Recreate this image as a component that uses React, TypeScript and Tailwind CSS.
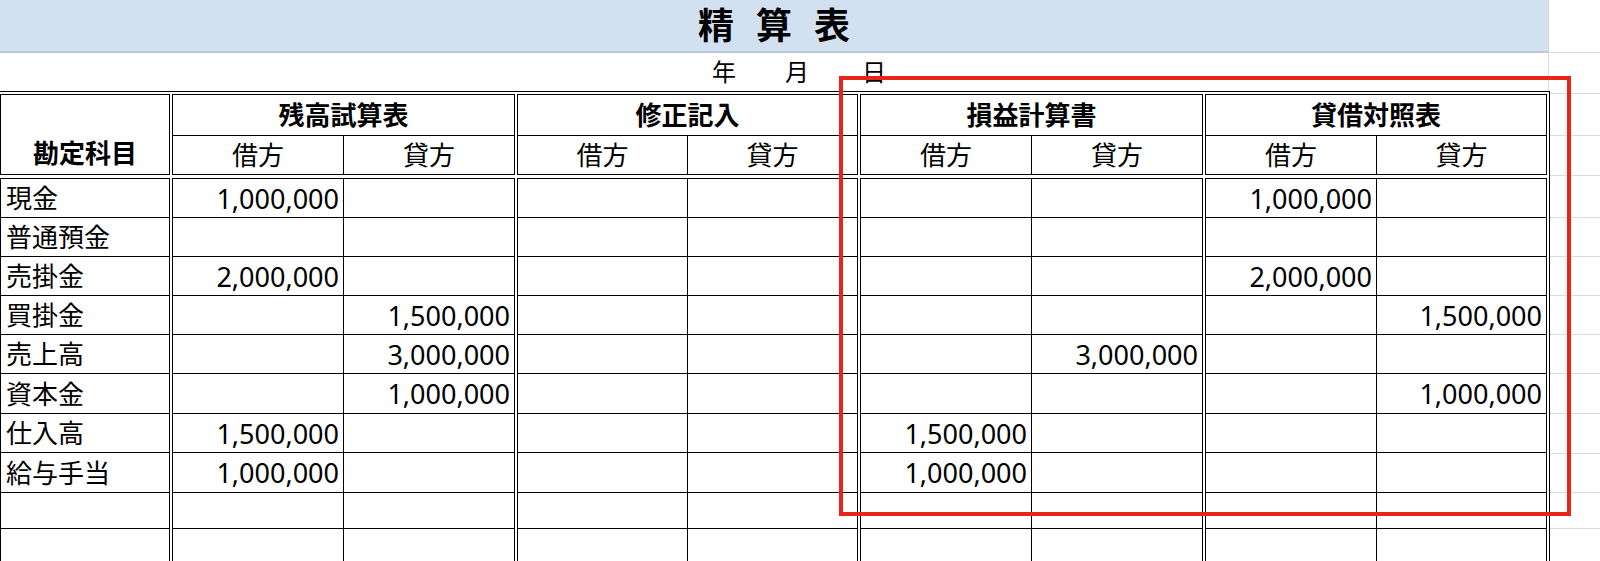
import React from "react";

const FONT = "font-['Noto_Sans','Noto_Sans_CJK_JP',sans-serif]";

type Row = { name: string; v: string[] };

const rows: Row[] = [
  { name: "現金", v: ["1,000,000", "", "", "", "", "", "1,000,000", ""] },
  { name: "普通預金", v: ["", "", "", "", "", "", "", ""] },
  { name: "売掛金", v: ["2,000,000", "", "", "", "", "", "2,000,000", ""] },
  { name: "買掛金", v: ["", "1,500,000", "", "", "", "", "", "1,500,000"] },
  { name: "売上高", v: ["", "3,000,000", "", "", "", "3,000,000", "", ""] },
  { name: "資本金", v: ["", "1,000,000", "", "", "", "", "", "1,000,000"] },
  { name: "仕入高", v: ["1,500,000", "", "", "", "1,500,000", "", "", ""] },
  { name: "給与手当", v: ["1,000,000", "", "", "", "1,000,000", "", "", ""] },
  { name: "", v: ["", "", "", "", "", "", "", ""] },
  { name: "", v: ["", "", "", "", "", "", "", ""] },
  { name: "", v: ["", "", "", "", "", "", "", ""] },
];

const ROW_H = [
  "h-[39px]",
  "h-[39px]",
  "h-[39px]",
  "h-[39px]",
  "h-[39px]",
  "h-[40px]",
  "h-[39px]",
  "h-[40px]",
  "h-[36px]",
  "h-[40px]",
  "h-[40px]",
];

const SUB1_W = ["w-[171px]", "w-[170px]", "w-[171px]", "w-[171px]"];
const GROUPS = ["残高試算表", "修正記入", "損益計算書", "貸借対照表"];

const STRIP_H = [
  "h-[41px]",
  "h-[42px]",
  "h-[40px]",
  "h-[42px]",
  "h-[39px]",
  "h-[39px]",
  "h-[39px]",
  "h-[39px]",
  "h-[40px]",
  "h-[40px]",
  "h-[39px]",
  "h-[36px]",
];

function GroupHeader({ g }: { g: number }) {
  return (
    <div className="h-[81px] border border-black flex flex-col">
      <div className="h-[41px] shrink-0 border-b border-black flex items-center justify-center text-[26px] font-bold leading-none">
        {GROUPS[g]}
      </div>
      <div className="flex-1 flex">
        <div
          className={`${SUB1_W[g]} shrink-0 border-r border-black flex items-center justify-center text-[26px] leading-none`}
        >
          借方
        </div>
        <div className="flex-1 flex items-center justify-center text-[26px] leading-none">
          貸方
        </div>
      </div>
    </div>
  );
}

function GroupBody({ g }: { g: number }) {
  return (
    <div className="border border-black flex flex-col">
      {rows.map((r, i) => (
        <div key={i} className={`${ROW_H[i]} shrink-0 flex border-b border-black`}>
          <div
            className={`${SUB1_W[g]} shrink-0 border-r border-black flex items-center justify-end pr-[4px] text-[27px] leading-none`}
          >
            {r.v[g * 2]}
          </div>
          <div className="flex-1 flex items-center justify-end pr-[4px] text-[27px] leading-none">
            {r.v[g * 2 + 1]}
          </div>
        </div>
      ))}
    </div>
  );
}

export default function App() {
  return (
    <div className={`w-[1600px] h-[561px] overflow-hidden bg-white relative text-black ${FONT}`}>
      {/* Title row */}
      <div className="flex h-[53px]">
        <div className="w-[1548px] shrink-0 h-[53px] bg-[#d3e0f0] border-b-2 border-[#b9c8db] flex items-center justify-center gap-[22px] text-[36px] font-bold leading-none">
          <span>精</span>
          <span>算</span>
          <span>表</span>
        </div>
        <div className="w-px shrink-0 bg-[#d4d4d4]" />
        <div className="flex-1 border-b border-[#dadada]" />
      </div>

      <div className="flex">
        <div className="w-[1550px] shrink-0">
          {/* Date row */}
          <div className="w-[1549px] h-[38px] border-r border-[#dadada] flex items-center pl-[712px] text-[24px] leading-none">
            <span>年</span>
            <span className="ml-[49px]">月</span>
            <span className="ml-[53px]">日</span>
          </div>

          {/* Table */}
          <div className="ml-[-3px] w-[1553px] h-[600px] border border-black p-[2px]">
            <div className="grid grid-cols-[170px_343px_341px_343px_342px] grid-rows-[81px_auto] gap-x-[2px] gap-y-[3px]">
              <div className="h-[81px] border border-black flex flex-col">
                <div className="h-[41px] shrink-0" />
                <div className="flex-1 flex items-center justify-center pb-[4px] text-[26px] font-bold leading-none">
                  勘定科目
                </div>
              </div>
              {[0, 1, 2, 3].map((g) => (
                <GroupHeader key={g} g={g} />
              ))}

              <div className="border border-black flex flex-col">
                {rows.map((r, i) => (
                  <div
                    key={i}
                    className={`${ROW_H[i]} shrink-0 border-b border-black flex items-center pl-[5px] text-[26px] leading-none`}
                  >
                    {r.name}
                  </div>
                ))}
              </div>
              {[0, 1, 2, 3].map((g) => (
                <GroupBody key={g} g={g} />
              ))}
            </div>
          </div>
        </div>

        {/* spreadsheet grid strip on the right */}
        <div className="flex-1 flex flex-col">
          {STRIP_H.map((h, i) => (
            <div key={i} className={`${h} shrink-0 border-b border-[#dadada]`} />
          ))}
        </div>
      </div>

      {/* Red highlight overlay */}
      <div className="absolute left-[839px] top-[76px] w-[732px] h-[440px] border-4 border-[#e8251b] pointer-events-none" />
    </div>
  );
}
